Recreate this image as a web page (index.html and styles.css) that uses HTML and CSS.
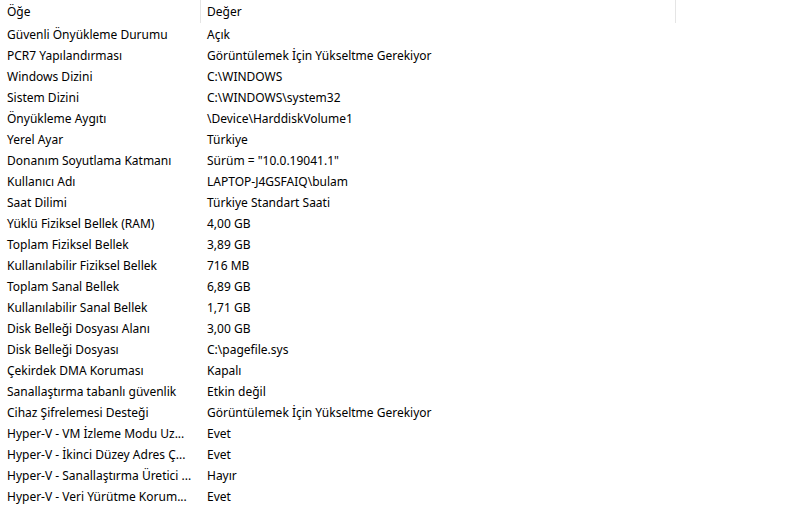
FILE: index.html
```html
<!DOCTYPE html>
<html lang="tr">
  <head>
    <meta charset="UTF-8">
    <title>Sistem Bilgisi</title>
    <link rel="stylesheet" href="styles.css">
  </head>
  <body>
    <div class="list-view">
      <div class="list-header">
        <div class="col col-item">Öğe</div>
        <div class="col col-value">Değer</div>
        <div class="col col-rest"></div>
      </div>
      <div class="list-body">
        <div class="row"><div class="col col-item">Güvenli Önyükleme Durumu</div><div class="col col-value">Açık</div></div>
        <div class="row"><div class="col col-item">PCR7 Yapılandırması</div><div class="col col-value">Görüntülemek İçin Yükseltme Gerekiyor</div></div>
        <div class="row"><div class="col col-item">Windows Dizini</div><div class="col col-value">C:\WINDOWS</div></div>
        <div class="row"><div class="col col-item">Sistem Dizini</div><div class="col col-value">C:\WINDOWS\system32</div></div>
        <div class="row"><div class="col col-item">Önyükleme Aygıtı</div><div class="col col-value">\Device\HarddiskVolume1</div></div>
        <div class="row"><div class="col col-item">Yerel Ayar</div><div class="col col-value">Türkiye</div></div>
        <div class="row"><div class="col col-item">Donanım Soyutlama Katmanı</div><div class="col col-value">Sürüm = "10.0.19041.1"</div></div>
        <div class="row"><div class="col col-item">Kullanıcı Adı</div><div class="col col-value">LAPTOP-J4GSFAIQ\bulam</div></div>
        <div class="row"><div class="col col-item">Saat Dilimi</div><div class="col col-value">Türkiye Standart Saati</div></div>
        <div class="row"><div class="col col-item">Yüklü Fiziksel Bellek (RAM)</div><div class="col col-value">4,00 GB</div></div>
        <div class="row"><div class="col col-item">Toplam Fiziksel Bellek</div><div class="col col-value">3,89 GB</div></div>
        <div class="row"><div class="col col-item">Kullanılabilir Fiziksel Bellek</div><div class="col col-value">716 MB</div></div>
        <div class="row"><div class="col col-item">Toplam Sanal Bellek</div><div class="col col-value">6,89 GB</div></div>
        <div class="row"><div class="col col-item">Kullanılabilir Sanal Bellek</div><div class="col col-value">1,71 GB</div></div>
        <div class="row"><div class="col col-item">Disk Belleği Dosyası Alanı</div><div class="col col-value">3,00 GB</div></div>
        <div class="row"><div class="col col-item">Disk Belleği Dosyası</div><div class="col col-value">C:\pagefile.sys</div></div>
        <div class="row"><div class="col col-item">Çekirdek DMA Koruması</div><div class="col col-value">Kapalı</div></div>
        <div class="row"><div class="col col-item">Sanallaştırma tabanlı güvenlik</div><div class="col col-value">Etkin değil</div></div>
        <div class="row"><div class="col col-item">Cihaz Şifrelemesi Desteği</div><div class="col col-value">Görüntülemek İçin Yükseltme Gerekiyor</div></div>
        <div class="row"><div class="col col-item">Hyper-V - VM İzleme Modu Uz...</div><div class="col col-value">Evet</div></div>
        <div class="row"><div class="col col-item">Hyper-V - İkinci Düzey Adres Ç...</div><div class="col col-value">Evet</div></div>
        <div class="row"><div class="col col-item">Hyper-V - Sanallaştırma Üretici ...</div><div class="col col-value">Hayır</div></div>
        <div class="row"><div class="col col-item">Hyper-V - Veri Yürütme Korum...</div><div class="col col-value">Evet</div></div>
      </div>
    </div>
  </body>
</html>
```
FILE: styles.css
```css
:root {
  --text-color: #000000;
  --divider-color: #e5e5e5;
  --row-height: 21px;
}

* {
  margin: 0;
  padding: 0;
  box-sizing: border-box;
}

body {
  font-family: 'Noto Sans', 'Open Sans', sans-serif;
  font-size: 12px;
  color: var(--text-color);
  background-color: #ffffff;
  overflow: hidden;
}

.list-view {
  width: 806px;
}

.list-header {
  display: flex;
  height: 23px;
  align-items: stretch;
}

.list-header .col {
  line-height: 23px;
  border-right: 1px solid var(--divider-color);
}

.list-header .col-rest {
  flex: 1;
  border-right: none;
}

.list-body {
  padding-top: 1px;
}

.row {
  display: flex;
  height: var(--row-height);
  line-height: var(--row-height);
}

.col {
  white-space: nowrap;
  overflow: hidden;
}

.col-item {
  width: 201px;
  padding-left: 7px;
}

.col-value {
  width: 475px;
  padding-left: 6px;
}
```
